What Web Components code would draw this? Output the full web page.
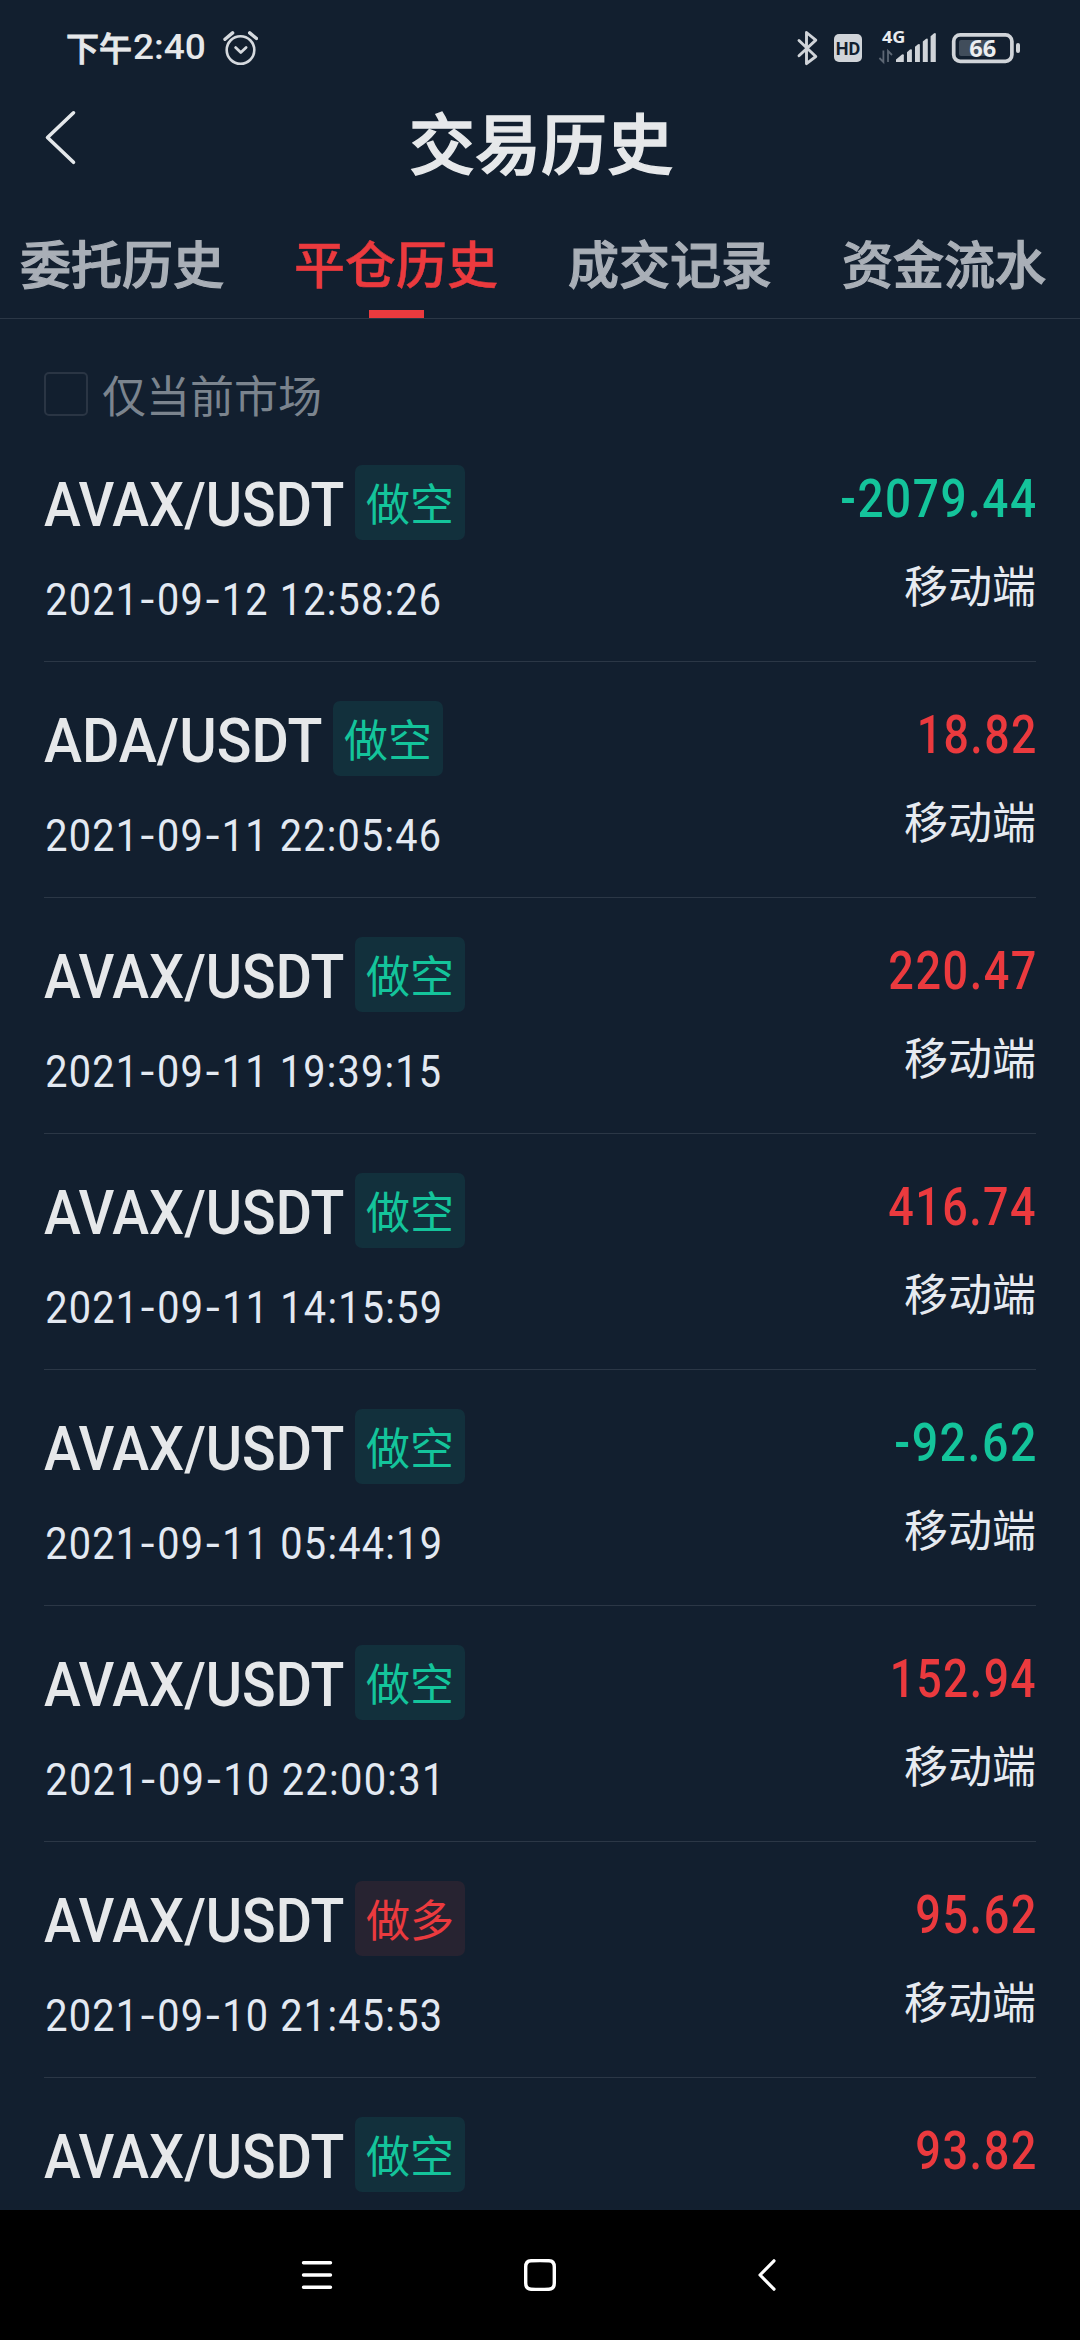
<!DOCTYPE html>
<html lang="zh-CN">
<head>
<meta charset="utf-8">
<title>交易历史</title>
<style>
html,body{margin:0;padding:0;background:#121f2f}
body{width:1080px;height:2340px;overflow:hidden;font-family:"Noto Sans CJK SC",sans-serif;color:#e6e8ea}
</style>
</head>
<body>
<history-app></history-app>
<script>
const CJK = '"Noto Sans CJK SC",sans-serif';
const NUM = 'Roboto,"Noto Sans CJK SC",sans-serif';

class BaseElement extends HTMLElement {
  constructor() { super(); this.attachShadow({mode: 'open'}); }
  render(css, html) { this.shadowRoot.innerHTML = `<style>${css}</style>${html}`; }
}

/* One line of text condensed so that its visible glyphs span the given width.
   "spacing" adds tracking, "dash" adds room on both sides of each hyphen. */
class FitText extends BaseElement {
  connectedCallback() {
    const num = (name, fallback) => parseFloat(this.getAttribute(name) || fallback);
    const w = num('width', 0), size = num('size', 16), line = num('line', 20);
    const weight = num('weight', 400), spacing = num('spacing', 0), dash = num('dash', 0);
    const text = this.textContent;
    const ctx = document.createElement('canvas').getContext('2d');
    ctx.font = `${weight} ${size}px Roboto`;
    const m = ctx.measureText(text);
    const hyphens = dash ? text.split('-').length - 1 : 0;
    const natural = m.actualBoundingBoxLeft + m.actualBoundingBoxRight + spacing * (text.length - 1) + hyphens * dash * 2;
    const k = w / natural;
    const dx = m.actualBoundingBoxLeft * k;
    const body = dash ? text.replace(/-/g, '<b>-</b>') : text;
    this.render(`
      :host{display:block;width:${w}px;font:${weight} ${size}px/${line}px ${NUM}}
      span{display:block;width:max-content;white-space:pre;letter-spacing:${spacing}px;transform-origin:0 50%;transform:translateX(${dx}px) scaleX(${k})}
      b{display:inline-block;font-weight:inherit;margin:0 ${dash}px;transform:scaleX(1.25)}`,
      `<span>${body}</span>`);
  }
}
customElements.define('fit-text', FitText);

class StatusBar extends BaseElement {
  connectedCallback() {
    this.render(`
      :host{display:flex;height:92px;justify-content:space-between;align-items:flex-start;padding:0 60px 0 66px;box-sizing:border-box;color:#e6e8ea}
      .time{display:flex;padding-top:23px;font:500 33px/48px ${CJK};gap:1.5px}
      .time span{-webkit-text-stroke:.9px currentColor}
      fit-text{padding-top:1px}
      .left{display:flex}
      .clock{margin:28px 0 0 17px}
      svg{display:block}
      .right{margin-top:16px}`,
      `<div class="left">
        <div class="time"><span>下午</span><fit-text width="71" size="35" weight="500" line="48">2:40</fit-text></div>
        <svg class="clock" width="36" height="40" viewBox="222 28 36 40" fill="none" stroke="#d5d9de" stroke-linecap="round">
          <circle cx="240.5" cy="50" r="13.8" stroke-width="2.6"/>
          <path d="M235.6 47.6l5.2 4.9 5.3-5" stroke-width="2.8" stroke-linejoin="round"/>
          <path d="M225 39.3l7.6-6.4M249.7 32.9l6.8 5.6" stroke-width="3.4"/>
        </svg>
      </div>
      <svg class="right" width="226" height="56" viewBox="794 16 226 56">
        <path d="M799 40.5l16.8 16-9.3 7.2V32.5l9.3 7.6-16.8 15.6" fill="none" stroke="#d0d4d9" stroke-width="2.9" stroke-linejoin="round" stroke-linecap="round"/>
        <rect x="834" y="34" width="28" height="28" rx="5" fill="#d0d4d9"/>
        <text x="848" y="54.8" text-anchor="middle" font-family="Roboto" font-weight="700" font-size="19" fill="#121f2f" textLength="24.5" lengthAdjust="spacingAndGlyphs">HD</text>
        <text x="882" y="43.3" font-family="Noto Sans" font-weight="700" font-size="16.5" fill="#e8eaed" textLength="23.5" lengthAdjust="spacingAndGlyphs">4G</text>
        <path d="M883.4 50.5v11.5l-4-4M888 62V51l4 4" fill="none" stroke="#5d6774" stroke-width="1.8"/>
        <g fill="#d0d4d9">
          <path d="M896 62v-2.6l6-5q1.8-.6 1.8.8v6.8z"/>
          <path d="M907 62V52.2l3-2.7q1.9-1 1.9.8V62z"/>
          <path d="M915 62V46.8l3-2.5q1.9-1 1.9.8V62z"/>
          <path d="M922.8 62V41.4l3-2.5q2-1 2 .8V62z"/>
          <path d="M930.6 62V36.2l3.2-2.8q2-1 2 .8V62z"/>
        </g>
        <rect x="953.7" y="34.8" width="58.2" height="26.5" rx="6.5" fill="none" stroke="#d0d4d9" stroke-width="3.7"/>
        <rect x="959" y="40" width="32" height="16" rx="2" fill="#414d5b"/>
        <rect x="1016" y="43" width="4" height="10" rx="2" fill="#d0d4d9"/>
        <text x="982.8" y="56.8" text-anchor="middle" font-family="Noto Sans" font-weight="700" font-size="23" fill="#eceef0" textLength="27" lengthAdjust="spacingAndGlyphs">66</text>
      </svg>`);
  }
}
customElements.define('status-bar', StatusBar);

class PageHeader extends BaseElement {
  connectedCallback() {
    this.render(`
      :host{display:grid;grid-template-columns:120px 1fr 120px;height:96px;align-items:center}
      svg{display:block;margin:0 0 4px 42px}
      h1{margin:0;text-align:center;font:500 66px/96px ${CJK};color:#e6e8ea;padding-left:2px;-webkit-text-stroke:1.4px currentColor}`,
      `<svg width="40" height="60" viewBox="42 108 40 60" fill="none" stroke="#e4e7ea" stroke-width="3.6" stroke-linecap="round" stroke-linejoin="round"><path d="M73.500 112.800L47.500 137.500l26 24.800"/></svg>
      <h1><slot></slot></h1>`);
  }
}
customElements.define('page-header', PageHeader);

class TabItem extends BaseElement {
  connectedCallback() {
    this.render(`
      :host{display:flex;flex-direction:column;align-items:center;justify-content:space-between;width:274px;flex:none;font:500 51px/76px ${CJK};color:#a9afb7;padding-top:36px;box-sizing:border-box;-webkit-text-stroke:1.2px currentColor}
      :host([active]){color:#eb3a3e;-webkit-text-stroke:.5px currentColor}
      i{display:block;width:55px;height:8px}
      :host([active]) i{background:#eb3a3e}`,
      `<span><slot></slot></span><i></i>`);
  }
}
customElements.define('tab-item', TabItem);

class TabBar extends BaseElement {
  connectedCallback() {
    this.render(`:host{display:flex;height:131px;box-sizing:border-box;border-bottom:1px solid #2b3746;margin-left:-15px;width:1095px;overflow:hidden}`, `<slot></slot>`);
  }
}
customElements.define('tab-bar', TabBar);

class MarketFilter extends BaseElement {
  connectedCallback() {
    this.render(`
      :host{display:flex;height:107px;box-sizing:border-box;padding:53px 44px 0;gap:14px;font:400 44px/44px ${CJK};color:#7b848e}
      i{width:44px;height:44px;box-sizing:border-box;border:2.5px solid #2a3544;border-radius:5px}`,
      `<i></i><span><slot></slot></span>`);
  }
}
customElements.define('market-filter', MarketFilter);

class SideBadge extends BaseElement {
  connectedCallback() {
    this.render(`
      :host{display:block;width:110px;height:75px;border-radius:7px;text-align:center;font:400 44px/74px ${CJK};color:#14c49b;background:#12303c}
      :host([side=long]){color:#eb3a3e;background:#272331}`,
      `<slot></slot>`);
  }
}
customElements.define('side-badge', SideBadge);

class TradeRow extends BaseElement {
  connectedCallback() {
    const d = this.dataset, neg = d.amount[0] === '-';
    this.render(`
      :host{display:flex;justify-content:space-between;height:236px;flex:none;box-sizing:border-box;border-bottom:1px solid #2b3746;margin:0 44px}
      .l{padding-top:39px}
      .top{display:flex;height:75px;gap:11px}
      .date{padding:35px 0 0 2.5px;color:#e3e9f2}
      .r{display:flex;flex-direction:column;align-items:flex-end;padding-top:43px}
      .amt{color:${neg ? '#14c49b' : '#eb3a3e'};padding-right:1px}
      .src{margin-top:25px;font:400 44px/60px ${CJK};color:#e6eaf0}`,
      `<div class="l">
        <div class="top"><fit-text width="${d.pair[1] === 'D' ? 278 : 300}" size="61.5" weight="500" line="80">${d.pair}</fit-text>
        <side-badge side="${d.side}">${d.side === 'long' ? '做多' : '做空'}</side-badge></div>
        ${d.date ? `<div class="date"><fit-text width="${d.date.endsWith('1') ? 390 : 393}" size="45" line="50" spacing="1.4" dash="3.2">${d.date}</fit-text></div>` : ''}
      </div>
      <div class="r"><div class="amt"><fit-text width="${d.w}" size="54" weight="500" line="60" spacing="1.8">${d.amount}</fit-text></div>${d.date ? '<div class="src">移动端</div>' : ''}</div>`);
  }
}
customElements.define('trade-row', TradeRow);

class NavBar extends BaseElement {
  connectedCallback() {
    this.render(`
      :host{display:grid;grid-template-columns:repeat(3,226px);justify-content:center;height:130px;background:#000;align-items:center;justify-items:center}
      svg{display:block}`,
      `<svg width="40" height="40" viewBox="-20 -20 40 40" stroke="#fff" stroke-width="3.4" stroke-linecap="round"><path d="M-10.500-12.200h27M-10.500 0h27M-10.500 12.200h27"/></svg>
       <svg width="40" height="40" viewBox="-20 -20 40 40" fill="none" stroke="#fff" stroke-width="3.4"><path d="M-14.3-8Q-14.3-14-9-14.2Q0-14.6 9-14.2Q14.3-14 14.3-8V8Q14.3 14 9 14.2Q0 14.6-9 14.2Q-14.3 14-14.3 8Z"/></svg>
       <svg width="40" height="40" viewBox="-20 -20 40 40" fill="none" stroke="#fff" stroke-width="3.2" stroke-linecap="round" stroke-linejoin="round"><path d="M8-14.2L-6 0L8 14.2"/></svg>`);
  }
}
customElements.define('nav-bar', NavBar);

class HistoryApp extends BaseElement {
  connectedCallback() {
    const rows = [
      ['AVAX/USDT', 'short', '2021-09-12 12:58:26', '-2079.44', 193.5],
      ['ADA/USDT', 'short', '2021-09-11 22:05:46', '18.82', 115],
      ['AVAX/USDT', 'short', '2021-09-11 19:39:15', '220.47', 145],
      ['AVAX/USDT', 'short', '2021-09-11 14:15:59', '416.74', 146],
      ['AVAX/USDT', 'short', '2021-09-11 05:44:19', '-92.62', 139],
      ['AVAX/USDT', 'short', '2021-09-10 22:00:31', '152.94', 142],
      ['AVAX/USDT', 'long', '2021-09-10 21:45:53', '95.62', 118],
      ['AVAX/USDT', 'short', '', '93.82', 118]
    ];
    this.render(`
      :host{display:flex;flex-direction:column;width:1080px;height:2340px;overflow:hidden;background:#121f2f}
      main{flex:1;min-height:0;overflow:hidden;display:flex;flex-direction:column}
      status-bar,page-header,tab-bar,market-filter,nav-bar{flex:none}`,
      `<status-bar></status-bar><page-header>交易历史</page-header>
      <tab-bar><tab-item>委托历史</tab-item><tab-item active>平仓历史</tab-item><tab-item>成交记录</tab-item><tab-item>资金流水</tab-item></tab-bar>
      <main><market-filter>仅当前市场</market-filter>
      ${rows.map(([p, s, t, a, w]) => `<trade-row data-pair="${p}" data-side="${s}" data-date="${t}" data-amount="${a}" data-w="${w}"></trade-row>`).join('')}
      </main><nav-bar></nav-bar>`);
  }
}
customElements.define('history-app', HistoryApp);
</script>
</body>
</html>
